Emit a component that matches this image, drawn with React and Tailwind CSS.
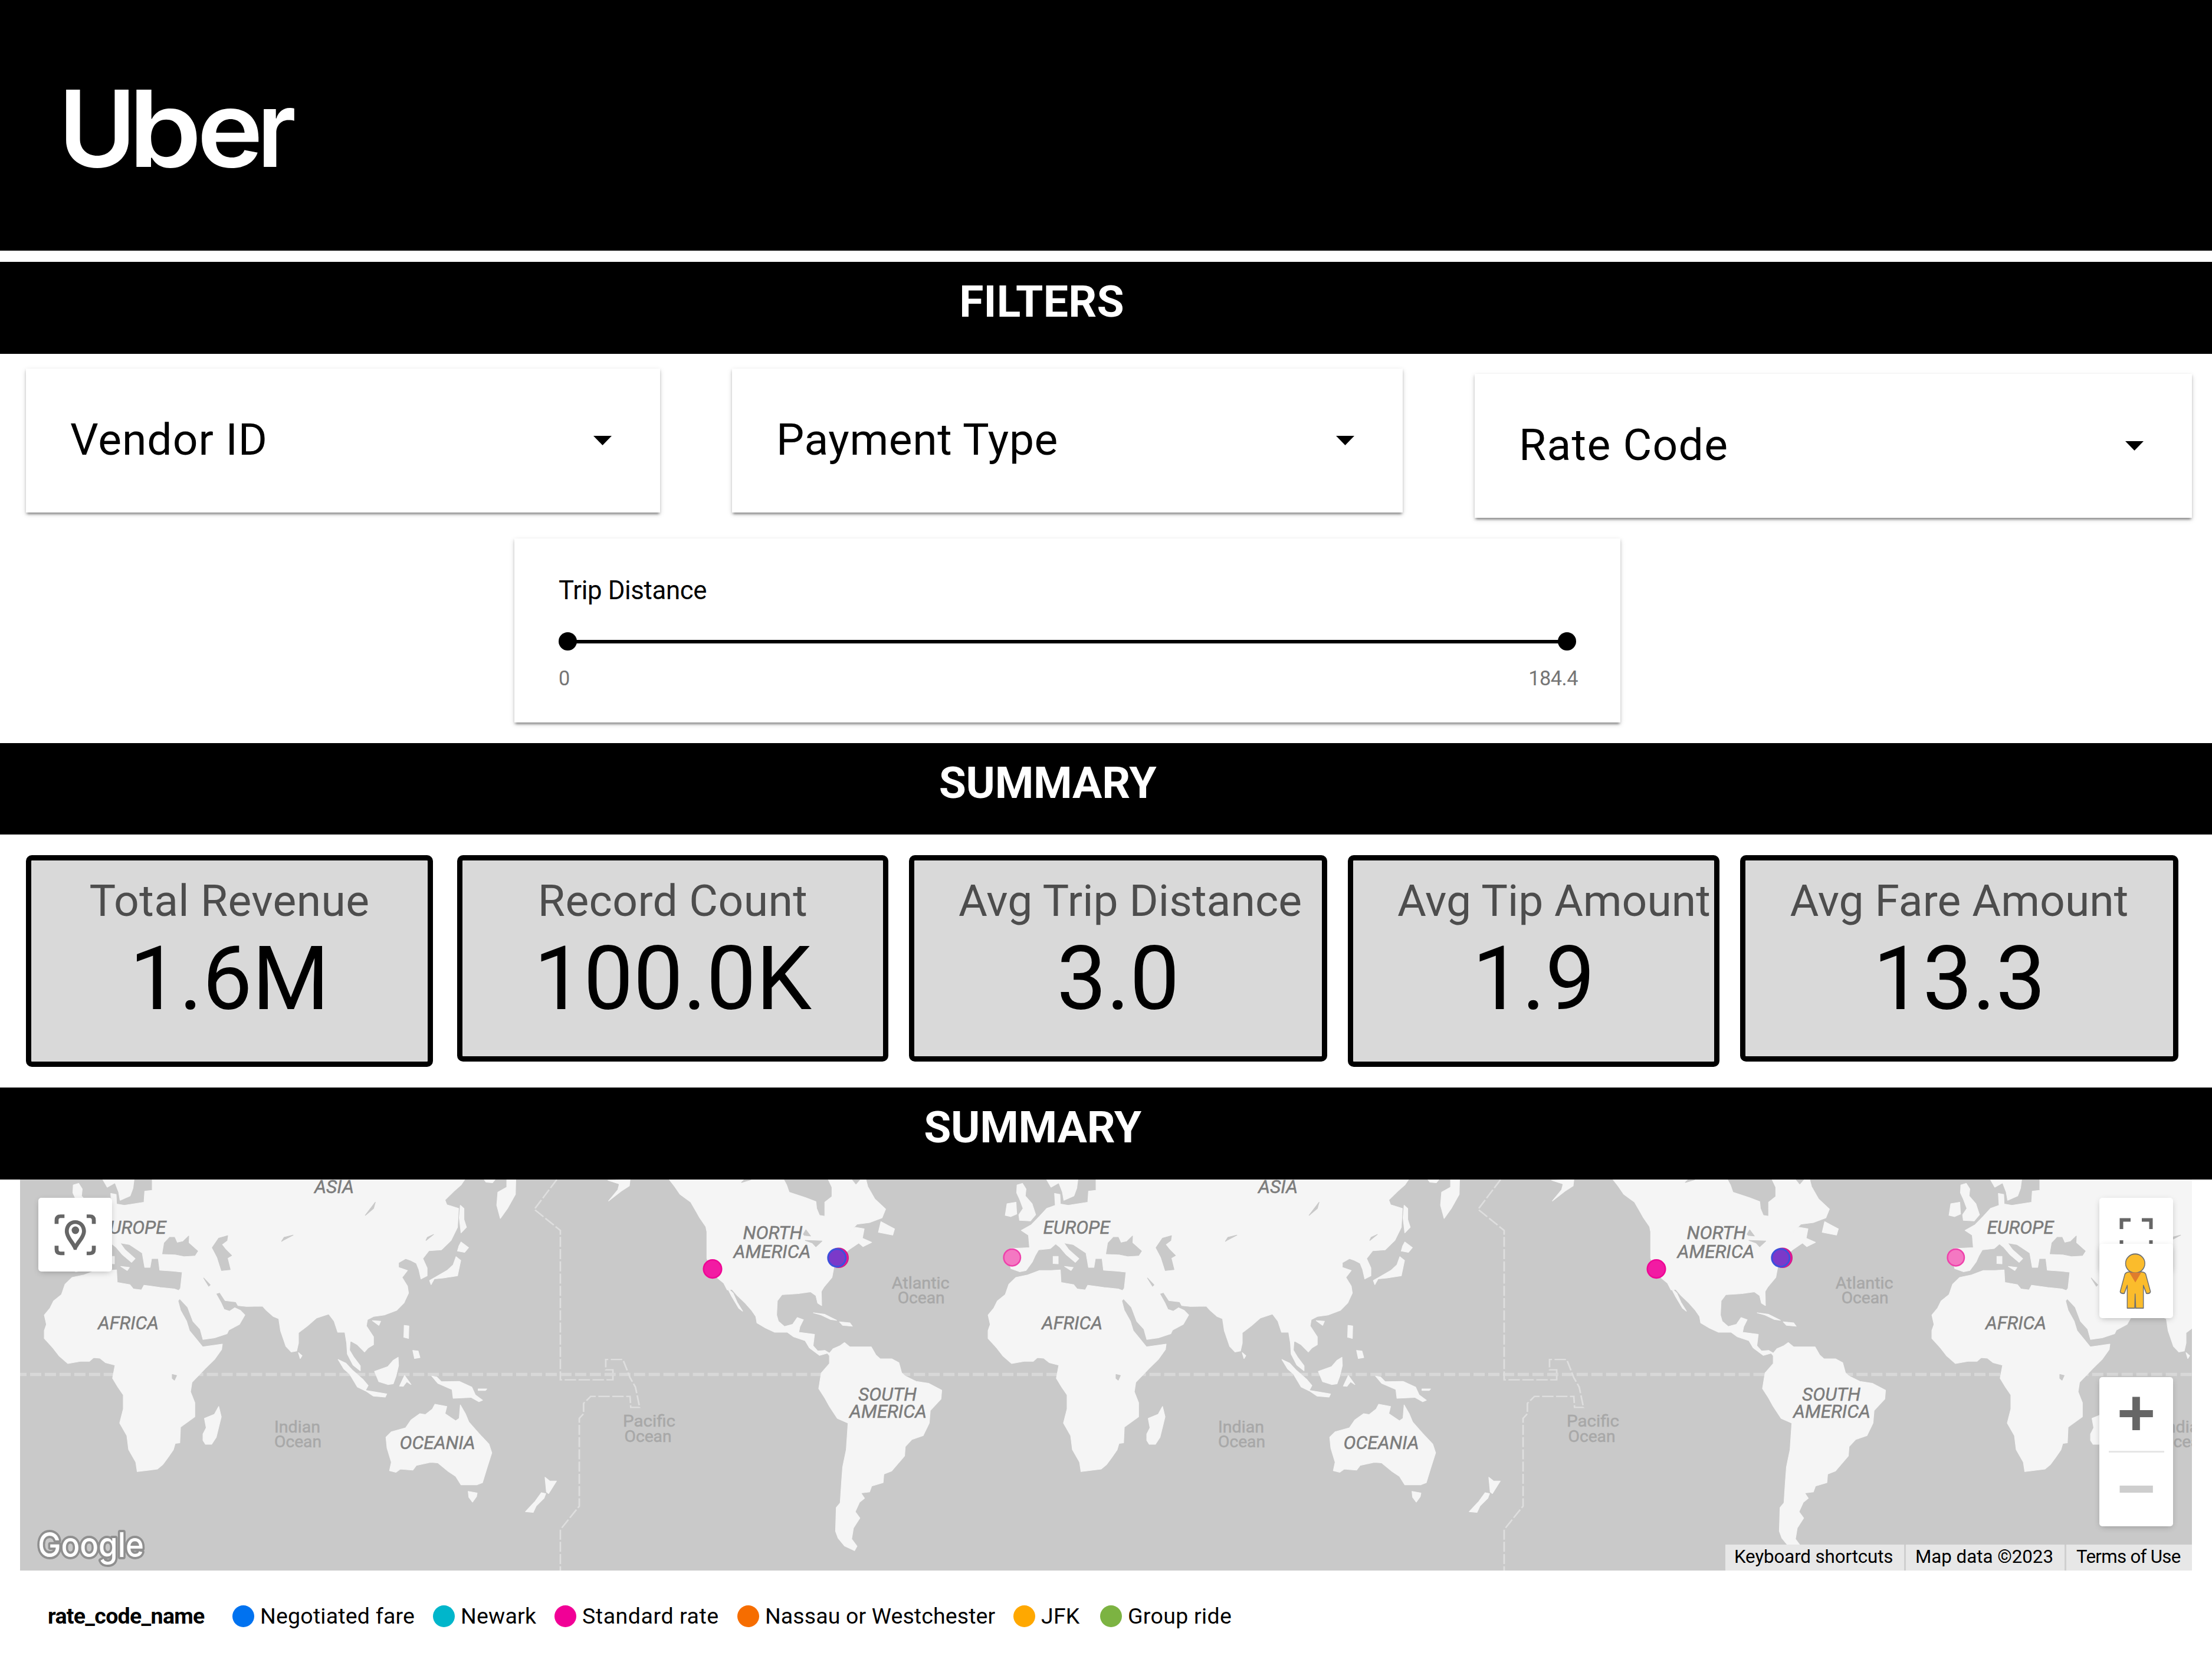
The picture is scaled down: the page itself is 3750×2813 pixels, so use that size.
import React from "react";

const OLD_WORLD = [
  // Africa, Asia and Europe as one landmass
  "505,385 500,392 488,387 448,382 403,375 396,390 373,387 363,373 328,366 326,326 300,328 268,328 235,342 202,350 182,372 172,405 150,425 140,448 124,470 130,500 124,520 124,545 148,575 165,600 190,625 225,618 250,618 262,606 280,608 295,622 322,630 315,672 330,700 345,725 345,770 335,815 355,855 360,900 380,940 384,970 440,962 455,948 472,922 485,900 490,880 503,878 505,828 545,795 545,750 533,715 537,685 575,640 600,612 620,580 622,563 567,572 548,545 530,520 522,490 505,455 498,425 503,418 525,445 540,490 560,515 568,548 600,543 635,530 640,518 670,500 685,470 672,455 657,447 642,458 627,452 618,430 604,402 615,398 630,424 660,428 666,440 690,443 735,442 745,455 765,475 780,482 785,520 800,570 815,588 830,585 835,560 835,527 860,505 885,480 920,467 935,490 945,525 965,525 970,560 972,595 988,630 1008,648 1008,632 990,605 978,582 980,552 1000,565 1020,588 1030,575 1045,565 1045,540 1025,505 1028,485 1045,475 1075,470 1110,455 1130,432 1143,400 1140,378 1125,350 1140,328 1115,318 1115,303 1135,290 1150,296 1165,305 1172,325 1178,355 1195,345 1195,320 1183,290 1200,265 1235,262 1262,232 1280,190 1283,130 1250,118 1245,103 1270,75 1290,55 1300,38 426,38 426,72 405,75 403,110 348,120 326,116 325,85 310,82 312,120 288,130 268,155 245,182 217,200 237,215 240,255 187,258 182,290 188,322 212,332 230,328 248,300 255,282 265,262 298,258 313,243 325,254 343,278 368,302 378,290 350,262 336,240 362,245 398,272 405,318 420,318 424,290 443,290 447,327 483,330 510,333",
  "288,38 300,62 322,48 332,78 336,104 364,90 372,65 375,38",
  "205,55 220,50 230,68 228,90 247,115 257,150 242,170 212,168 210,150 222,130 212,100 204,80",
  "177,115 202,110 204,148 188,156 172,152",
  "306,283 320,283 320,307 306,306",
  "338,315 362,318 356,328",
  // Kamchatka and the Okhotsk coast
  "1418,38 1443,38 1442,85 1420,130 1400,162 1390,120 1393,78 1418,62",
  "1355,38 1385,38 1378,48 1360,46",
  "1288,120 1298,130 1298,165 1305,190 1290,208 1285,160",
  "1290,237 1311,255 1300,270 1280,266 1284,250",
  "1276,284 1289,296 1280,345 1240,352 1215,355 1206,373 1202,360 1225,345 1252,327 1268,310",
  "1131,503 1144,505 1143,545 1130,541",
  "1155,583 1170,585 1175,606 1160,609",
  "1042,488 1065,490 1060,503",
  "835,590 845,600 840,609",
  // Indonesia and New Guinea
  "946,612 968,624 985,645 1015,675 1030,695 1022,712 1000,700 978,658 962,642",
  "1020,710 1050,716 1082,722 1078,732 1045,729",
  "1048,650 1085,635 1100,615 1114,605 1115,632 1108,665 1100,690 1085,692 1060,683",
  "1132,663 1150,692 1138,683 1128,698 1118,697",
  "1208,665 1222,668 1235,683 1285,682 1320,700 1330,725 1350,742 1340,747 1318,733 1268,736 1265,708 1225,688",
  "1338,706 1362,706 1358,711 1338,711",
  // Australia, Tasmania, New Zealand, Madagascar
  "1080,860 1095,843 1135,830 1150,805 1175,785 1190,788 1210,770 1217,755 1250,762 1245,785 1275,808 1285,800 1288,757 1302,785 1312,812 1340,848 1368,882 1376,910 1362,960 1350,1005 1335,1012 1290,1012 1275,985 1255,970 1225,942 1205,940 1165,950 1155,965 1120,962 1108,972 1090,967 1095,940 1083,895",
  "1310,1033 1335,1038 1333,1050 1322,1067 1312,1052",
  "1525,988 1538,1000 1557,1000 1535,1040 1529,1035",
  "1515,1037 1527,1040 1522,1055 1500,1080 1492,1100 1470,1098 1497,1065",
  "612,762 619,795 605,860 592,883 575,883 568,870 568,850 577,830 572,800 600,787",
];

const OLD_WORLD_LAKES = [
  "455,275 460,240 475,222 488,222 495,240 512,236 528,218 527,240 553,266 545,280 515,282 490,276",
  "594,255 612,225 637,217 635,232 620,245 632,262 648,280 636,288 644,325 620,328 608,285",
  "1050,110 1045,130 1022,152",
  "820,215 795,222 788,235 795,230",
  "1213,213 1192,232 1196,222",
  "482,660 494,663 488,678 482,672",
  "570,352 588,374 584,378",
];

const AMERICAS = [
  "470,38 485,60 500,85 530,110 545,140 555,160 572,188 575,205 575,250 575,290 590,325 605,352 622,368 632,390 645,388 660,408 682,432 700,455 712,475 715,495 740,512 765,525 800,525 818,540 850,552 862,575 890,599 912,592 918,600 918,625 895,655 888,705 905,735 918,762 940,800 970,815 965,900 955,955 952,1000 948,1070 937,1085 935,1160 942,1182 960,1207 988,1222 995,1208 980,1185 985,1150 1003,1118 990,1098 1002,1068 1016,1055 1006,1038 1030,1035 1036,1016 1068,1005 1070,978 1092,968 1128,920 1130,890 1148,868 1180,855 1197,815 1200,775 1230,738 1232,710 1195,688 1160,682 1130,665 1120,655 1112,622 1092,610 1060,610 1048,598 1035,572 975,572 960,558 948,568 928,578 918,592 905,583 885,585 872,568 876,532 832,525 835,508 845,485 828,478 815,500 792,507 775,490 770,470 772,425 785,405 830,402 865,396 880,408 885,432 896,440 895,395 903,380 925,350 930,320 945,290 972,262 1000,240 1012,252 1036,238 1010,225 1015,195 990,190 968,212 995,180 1030,175 1065,160 1075,132 1045,100 1025,60 1020,38 1005,38 992,55 980,38 915,38 925,62 925,92 905,110 905,155 890,152 882,130 880,108 850,95 805,78 798,55 790,38",
  "632,383 648,400 660,430 675,458 664,448 645,412",
  "1062,172 1100,195 1095,215 1055,206",
  "298,40 360,38 358,58 335,75 300,106 326,70 330,52",
  "873,463 905,468 938,487 920,484 895,470",
  "946,492 975,495 982,506 955,503",
];

const AMERICAS_LAKES = ["845,212 852,198 865,218 848,216", "850,232 897,234 880,252 870,240", "672,47 698,38 680,38"];

const DATE_LINE = [
  "155,38 92,133 165,200 165,677 312,677 312,645 292,645 292,612 340,612 360,670 375,700 387,765 362,765 360,730 250,730 230,752 230,785 218,800 218,1080 165,1155 165,1286",
];

function Shapes({ list, fill }) {
  return list.map((points) => (
    <polygon key={points} points={points} fill={fill} stroke={fill} strokeWidth="2" strokeLinejoin="round" />
  ));
}

function Place({ x, lines, ocean }) {
  return lines.map(([text, y, dx, w]) => (
    <text
      key={text + y}
      x={x + dx - w / 2}
      y={ocean ? y : y - 1}
      fontSize={ocean ? 28.5 : 31.5}
      fontStyle={ocean ? "normal" : "italic"}
      fill={ocean ? "#a8a8a8" : "#7c7c7c"}
      stroke={ocean ? "#a8a8a8" : "#7c7c7c"}
      strokeWidth="0.5"
      textLength={w}
      lengthAdjust="spacingAndGlyphs"
    >
      {text}
    </text>
  ));
}

function WorldMap() {
  return (
    <svg viewBox="34 2000 3682 663" className="block h-[663px] w-[3682px]" fontFamily="Roboto, sans-serif">
      <rect x="34" y="2000" width="3682" height="663" fill="#c9c9c9" />
      <line x1="26" y1="2330.6" x2="3716" y2="2330.6" stroke="#d8d8d8" strokeWidth="5.5" strokeDasharray="19 5.97" />
      {[0, 1600, 3200].map((dx) => (
        <g key={dx}>
          <g transform={`translate(${dx} 1980) scale(0.6059 0.53125)`}>
            <Shapes list={OLD_WORLD} fill="#f5f5f5" />
            <Shapes list={OLD_WORLD_LAKES} fill="#c9c9c9" />
          </g>
          <Place x={dx + 566.5} lines={[["ASIA", 2023.6, 0, 67]]} />
          <Place x={dx + 225} lines={[["EUROPE", 2092.6, 0, 113]]} />
          <Place x={dx + 217.5} lines={[["AFRICA", 2254.7, 0, 103]]} />
          <Place x={dx + 741.6} lines={[["OCEANIA", 2458.2, 0, 128]]} />
          <Place ocean x={dx + 504} lines={[["Indian", 2429.4, 0, 78], ["Ocean", 2454.4, 1, 80]]} />
        </g>
      ))}
      {[850, 2450].map((dx) => (
        <g key={dx}>
          <g transform={`translate(${dx} 1980) scale(0.6059 0.53125)`}>
            {DATE_LINE.map((p) => (
              <polyline key={p} points={p} fill="none" stroke="#dedede" strokeWidth="4.5" strokeDasharray="32 7" />
            ))}
            <Shapes list={AMERICAS} fill="#f5f5f5" />
            <Shapes list={AMERICAS_LAKES} fill="#c9c9c9" />
          </g>
          <Place ocean x={dx + 250.5} lines={[["Pacific", 2418.8, 0, 89], ["Ocean", 2445.4, -2, 80]]} />
          <Place ocean x={dx + 710.7} lines={[["Atlantic", 2185, 0, 98], ["Ocean", 2209.5, 1, 80]]} />
          <Place x={dx + 459} lines={[["NORTH", 2101.7, 1, 101], ["AMERICA", 2133.5, 0, 131]]} />
          <Place x={dx + 655.5} lines={[["SOUTH", 2376.3, -1, 99], ["AMERICA", 2404.5, 0, 131]]} />
          <circle cx={dx + 358} cy="2151.6" r="15.3" fill="#f21ba3" stroke="#ee0795" strokeWidth="2.5" />
          <circle cx={dx + 571.8} cy="2132.8" r="16.5" fill="#ee0f8f" stroke="#c8208f" strokeWidth="1.5" />
          <circle cx={dx + 568.8} cy="2132.8" r="15" fill="#7b39c9" stroke="#3c50dc" strokeWidth="3" />
          <circle cx={dx + 865.8} cy="2132.2" r="14.2" fill="#f478c2" stroke="#ee42ab" strokeWidth="2.5" />
        </g>
      ))}
      <text
        x="64"
        y="2639.5"
        fontFamily="Inter, sans-serif"
        fontWeight="500"
        fontSize="58"
        textLength="180"
        lengthAdjust="spacingAndGlyphs"
        fill="#ffffff"
        stroke="#8f8f8f"
        strokeWidth="8"
        strokeLinejoin="round"
        paintOrder="stroke"
      >
        Google
      </text>
    </svg>
  );
}

const FLOAT = "absolute rounded-[5px] bg-white shadow-[0_3px_12px_-3px_rgba(0,0,0,0.3)]";

function MapControls() {
  return (
    <>
      <div className={`${FLOAT} left-[31px] top-[31px] size-[125px]`}>
        <svg viewBox="108 97 206 234" preserveAspectRatio="none" className="size-full" fill="none" stroke="#666666">
          <g strokeWidth="11">
            <path d="M159 180 V168 Q159 155.500 170 155.500 H181" />
            <path d="M243 155.500 H252 Q263 155.500 263 168 V180" />
            <path d="M263 249 V261 Q263 273.500 252 273.500 H243" />
            <path d="M181 273.500 H170 Q159 273.500 159 261 V249" />
          </g>
          <path
            d="M211 168 C194 168 182 183 182 203 C182 226 204 248 207 262 H215 C218 248 241 226 241 203 C241 183 228 168 211 168 Z M211 180 C222 180 230 190 230 203 C230 216 219 229 211 243 C203 229 193 216 193 203 C193 190 200 180 211 180 Z"
            fill="#666666"
            fillRule="evenodd"
            stroke="none"
          />
          <ellipse cx="211.500" cy="200" rx="10.500" ry="12" fill="#666666" stroke="none" />
        </svg>
      </div>

      <div className={`${FLOAT} left-[3525px] top-[31px] h-[125px] w-[125px]`}>
        <svg viewBox="0 0 125 125" className="size-full" fill="none" stroke="#666666" strokeWidth="6">
          <path d="M37.500 53 V37.500 H53 M72 37.500 H87.500 V53 M37.500 72 V87.500 H53 M72 87.500 H87.500 V72" />
        </svg>
      </div>
      <div className={`${FLOAT} left-[3525px] top-[109px] h-[126px] w-[125px]`}>
        <svg viewBox="178 273 375 291" preserveAspectRatio="none" className="size-full">
          <g fill="#fbbc2c" stroke="#6f7072" strokeWidth="4.500" strokeLinejoin="round">
            <path d="M330 383 H392 Q409 384 414 392 L438 460 Q436 469 417 467 L402 436 V525 H363 L360 470 L358 525 H320 V436 L305 467 Q285 469 284 460 L308 392 Q314 384 330 383 Z" />
            <ellipse cx="360.500" cy="350" rx="49" ry="37" />
          </g>
          <path d="M331 385.500 H391 L361 424 Z" fill="#e07d2c" />
        </svg>
      </div>
      <div className={`${FLOAT} left-[3525px] top-[335px] flex h-[253px] w-[125px] flex-col items-center`}>
        <svg viewBox="0 0 125 125" className="size-[125px]">
          <path d="M34.500 56 H56 V33.500 H68.800 V56 H90.800 V68 H68.800 V90 H56 V68 H34.500 Z" fill="#666666" />
        </svg>
        <div className="h-[3px] w-[94px] bg-[#e6e6e6]" />
        <svg viewBox="0 0 125 125" className="size-[125px]">
          <rect x="34.500" y="56" width="56.300" height="12" fill="#cecece" />
        </svg>
      </div>

      <div className="absolute bottom-0 right-0 flex h-[44px] items-stretch gap-[3px] bg-[#cfcfcf] text-[31.25px] leading-[41px] text-black">
        <span className="w-[303px] whitespace-nowrap bg-[#e7e7e7] pl-[15px] tracking-[-0.1px]">Keyboard shortcuts</span>
        <span className="w-[269px] whitespace-nowrap bg-[#e7e7e7] pl-[16px]">Map data ©2023</span>
        <span className="w-[213px] whitespace-nowrap bg-[#e7e7e7] pl-[17px] tracking-[-0.7px]">Terms of Use</span>
      </div>
    </>
  );
}

const CARD =
  "bg-white shadow-[0_6px_3px_-3px_rgba(0,0,0,0.2),0_3px_4px_0_rgba(0,0,0,0.2),0_3px_9px_0_rgba(0,0,0,0.14)]";

function Dropdown({ label, className }) {
  return (
    <div className={`${CARD} flex h-[244px] items-center justify-between pl-[75px] pr-[82px] ${className}`}>
      <span className="mb-[3px] whitespace-nowrap text-[75px] text-black">{label}</span>
      <svg viewBox="0 0 31 16" className="h-[16px] w-[31px]">
        <path d="M0 0 H31 L15.500 16 Z" fill="#000" />
      </svg>
    </div>
  );
}

function Band({ title, width, className }) {
  return (
    <h2 className={`${className} w-full bg-black pt-[23px] text-[75px] font-bold leading-[88px] text-white`}>
      <span className={`block text-center ${width}`}>{title}</span>
    </h2>
  );
}

function Score({ label, value, className }) {
  return (
    <div
      className={`overflow-hidden rounded-[10px] border-[9px] border-black bg-[#d9d9d9] px-[75px] pt-[24px] text-center ${className}`}
    >
      <div className="whitespace-nowrap text-[75px] leading-[88px] text-[#4d4d4d]">{label}</div>
      <div className="mt-px whitespace-nowrap text-[150px] leading-[176px] tracking-normal text-black">{value}</div>
    </div>
  );
}

const LEGEND = [
  ["Negotiated fare", "bg-[#0072f0]", "w-[340px] tracking-[0.2px]"],
  ["Newark", "bg-[#00b6cb]", "w-[206px] tracking-[0.2px]"],
  ["Standard rate", "bg-[#f10096]", "w-[310px] tracking-[0.55px]"],
  ["Nassau or Westchester", "bg-[#f66d00]", "w-[468px] tracking-[0.1px]"],
  ["JFK", "bg-[#ffa800]", "w-[147px] tracking-[0.2px]"],
  ["Group ride", "bg-[#7cb342]", "w-[240px] tracking-[0.3px]"],
];

const LOGO = [
  ["U", 99, 132],
  ["b", 218, 124],
  ["e", 334, 112],
  ["r", 436, 66],
];

export default function App() {
  return (
    <div className="flex h-[2813px] w-[3750px] flex-col overflow-hidden bg-white font-['Roboto',sans-serif]">
      <header className="h-[425px] bg-black">
        <svg viewBox="0 0 600 425" className="h-[425px] w-[600px]" role="img" aria-label="Uber">
          <g fontFamily="Inter, sans-serif" fontWeight="600" fontSize="180" fill="#ffffff">
            {LOGO.map(([letter, x, w]) => (
              <text key={letter} x={x} y="283" textLength={w} lengthAdjust="spacingAndGlyphs">
                {letter}
              </text>
            ))}
          </g>
        </svg>
      </header>

      <Band title="FILTERS" width="w-[3532px]" className="mt-[19px] h-[156px] tracking-[0.2px]" />

      <section className="h-[660px] pt-[25px]">
        <div className="flex items-start pl-[44px]">
          <Dropdown label="Vendor ID" className="w-[1075px] tracking-[1px]" />
          <Dropdown label="Payment Type" className="ml-[122px] w-[1137px] tracking-[0.6px]" />
          <Dropdown label="Rate Code" className="ml-[122px] mt-[9px] w-[1216px] tracking-[1.3px]" />
        </div>
        <div className={`${CARD} ml-[872px] mt-[35px] h-[312px] w-[1875px] pl-[75px] pr-[72px] pt-[63px]`}>
          <div className="text-[43.75px] leading-[50px] tracking-[-0.35px] text-black">Trip Distance</div>
          <div className="mt-[46px] flex w-[1725px] items-center">
            <span className="size-[31px] rounded-full bg-black" />
            <span className="-mx-1 h-[6px] flex-1 bg-black" />
            <span className="size-[31px] rounded-full bg-black" />
          </div>
          <div className="mt-[27px] flex justify-between text-[34.375px] leading-[40px] tracking-[-0.5px] text-[#757575]">
            <span>0</span>
            <span>184.4</span>
          </div>
        </div>
      </section>

      <Band title="SUMMARY" width="w-[3552px]" className="h-[155px] tracking-[-0.3px]" />

      <section className="flex h-[429px] items-start pl-[44px] pt-[35px]">
        <Score label="Total Revenue" value="1.6M" className="h-[359px] w-[690px] tracking-[0.4px]" />
        <Score label="Record Count" value="100.0K" className="ml-[41px] h-[350px] w-[731px] tracking-[0.4px]" />
        <Score label="Avg Trip Distance" value="3.0" className="ml-[35px] h-[350px] w-[709px] tracking-[0.1px]" />
        <Score label="Avg Tip Amount" value="1.9" className="ml-[35px] h-[359px] w-[630px]" />
        <Score label="Avg Fare Amount" value="13.3" className="ml-[35px] h-[350px] w-[743px] tracking-[0.1px]" />
      </section>

      <Band title="SUMMARY" width="w-[3501px]" className="h-[156px] tracking-[-0.3px]" />

      <section className="relative ml-[34px] h-[663px] w-[3682px] overflow-hidden">
        <WorldMap />
        <MapControls />
      </section>

      <footer className="mt-[55px] flex items-center pl-[81px] text-[37.5px] leading-[44px] text-black">
        <span className="w-[313px] font-bold tracking-[-0.7px]">rate_code_name</span>
        {LEGEND.map(([label, color, width]) => (
          <span key={label} className={`flex items-center gap-[10px] whitespace-nowrap ${width}`}>
            <span className={`size-[37px] rounded-full ${color}`} />
            {label}
          </span>
        ))}
      </footer>
    </div>
  );
}
